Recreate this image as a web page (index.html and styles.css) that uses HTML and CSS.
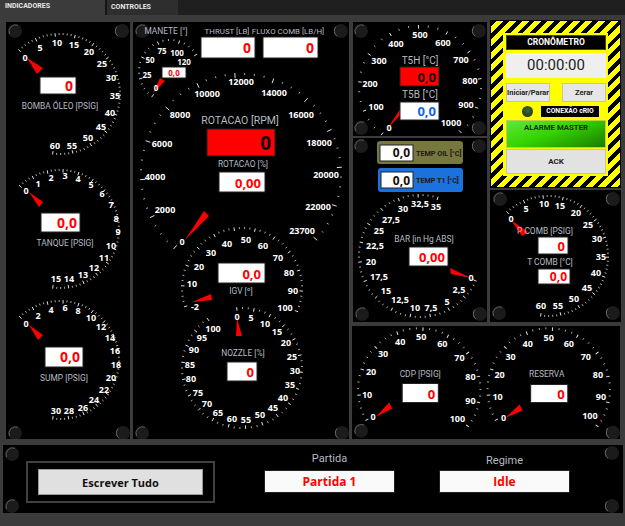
FILE: index.html
```html
<!DOCTYPE html>
<html lang="pt">
<head>
<meta charset="utf-8">
<title>Indicadores</title>
<link rel="stylesheet" href="styles.css">
</head>
<body>
<svg class="defs" width="0" height="0" aria-hidden="true">
  <defs>
    <symbol id="screw" viewBox="0 0 16 16" overflow="visible">
      <circle cx="8" cy="8" r="7" fill="#1b1b1b"/>
      <path d="M2.5 11 A6.6 6.6 0 0 1 11 2.3" fill="none" stroke="#5a5a5a" stroke-width="1"/>
    </symbol>
    <symbol id="screwr" viewBox="0 0 16 16" overflow="visible">
      <circle cx="8" cy="8" r="7" fill="#1b1b1b"/>
      <path d="M3 3.5 A6.6 6.6 0 0 0 4 13.2" fill="none" stroke="#6a6a6a" stroke-width="1"/>
    </symbol>
  </defs>
</svg>
<div class="tabs">
  <div class="tab tab-on">INDICADORES</div>
  <div class="tab tab-off">CONTROLES</div>
</div>
<main class="board">
  <section class="panel">
    <svg class="canvas" viewBox="6 22 124 417">
      <use href="#screw" x="7" y="23" width="16" height="16"/><use href="#screwr" x="114" y="23" width="16" height="16"/>
      <use href="#screw" x="7" y="425" width="16" height="16"/><use href="#screwr" x="115" y="425" width="16" height="16"/>
      <g class="ticks" data-c="60 94 61" data-a="-43 187" data-n="12" data-m="4"></g>
      <polygon class="needle" points="27,58 37,74 43,68"/>
      <text class="sc" x="25" y="61">0</text><text class="sc" x="40" y="51">5</text><text class="sc" x="57" y="46">10</text><text class="sc" x="74" y="48">15</text><text class="sc" x="89" y="55">20</text><text class="sc" x="102" y="67">25</text><text class="sc" x="111" y="81">30</text><text class="sc" x="115" y="99">35</text><text class="sc" x="110" y="116">40</text><text class="sc" x="101" y="130">45</text><text class="sc" x="88" y="141">50</text><text class="sc" x="72" y="149">55</text><text class="sc" x="55" y="149">60</text>
      <rect class="box" x="40" y="77" width="36" height="17"/><text class="val" x="73" y="91">0</text>
      <text class="lab" x="60" y="109">BOMBA ÓLEO [PSIG]</text>

      <g class="ticks" data-c="60 229 60" data-a="-43 187" data-n="15" data-m="3"></g>
      <polygon class="needle" points="29,192 39,207 43,202"/>
      <text class="sc" x="26" y="194">0</text><text class="sc" x="38" y="187">1</text><text class="sc" x="51" y="181">2</text><text class="sc" x="65" y="179">3</text><text class="sc" x="78" y="182">4</text><text class="sc" x="91" y="188">5</text><text class="sc" x="102" y="197">6</text><text class="sc" x="111" y="208">7</text><text class="sc" x="116" y="222">8</text><text class="sc" x="118" y="235">9</text><text class="sc" x="111" y="249">10</text><text class="sc" x="104" y="261">11</text><text class="sc" x="94" y="271">12</text><text class="sc" x="83" y="278">13</text><text class="sc" x="69" y="282">14</text><text class="sc" x="56" y="282">15</text>
      <rect class="box" x="41" y="213" width="39" height="19"/><text class="val" x="77" y="228">0,0</text>
      <text class="lab" x="65" y="246">TANQUE [PSIG]</text>

      <g class="ticks" data-c="60 360 60" data-a="-43 187" data-n="15" data-m="3"></g>
      <polygon class="needle" points="29,325 38,340 43,335"/>
      <text class="sc" x="26" y="327">0</text><text class="sc" x="38" y="319">2</text><text class="sc" x="51" y="313">4</text><text class="sc" x="65" y="311">6</text><text class="sc" x="78" y="314">8</text><text class="sc" x="91" y="321">10</text><text class="sc" x="101" y="330">12</text><text class="sc" x="110" y="341">14</text><text class="sc" x="115" y="354">16</text><text class="sc" x="116" y="368">18</text><text class="sc" x="111" y="381">20</text><text class="sc" x="104" y="393">22</text><text class="sc" x="94" y="403">24</text><text class="sc" x="83" y="411">26</text><text class="sc" x="69" y="414">28</text><text class="sc" x="56" y="414">30</text>
      <rect class="box" x="45" y="347" width="38" height="20"/><text class="val" x="80" y="362">0,0</text>
      <text class="lab" x="64" y="381">SUMP [PSIG]</text>
    </svg>
  </section>

  <section class="panel">
    <svg class="canvas" viewBox="133 22 216 417">
      <use href="#screw" x="134" y="23" width="16" height="16"/><use href="#screwr" x="333" y="23" width="16" height="16"/>
      <use href="#screw" x="134" y="425" width="16" height="16"/><use href="#screwr" x="334" y="425" width="16" height="16"/>

      <text class="lab" x="166" y="34">MANETE [°]</text>
      <g class="ticks" data-c="170 71 32" data-a="-145 58" data-n="5" data-m="3"></g>
      <polygon class="needle" points="153,93 160,78 165,81"/>
      <text class="sc s8" x="156" y="91">0</text><text class="sc s8" x="147" y="78">25</text><text class="sc s8" x="150" y="63">50</text><text class="sc s8" x="162" y="54">75</text><text class="sc s8" x="177" y="56">100</text><text class="sc s8" x="184" y="65">120</text>
      <rect class="box" x="162" y="67" width="24" height="11"/><text class="val v9" x="174" y="76">0,0</text>

      <text class="lab l8" x="227" y="34">THRUST [LB]</text><text class="lab l8" x="288" y="34">FLUXO COMB [LB/H]</text>
      <rect class="box" x="201" y="37" width="54" height="21"/><text class="val v14" x="251" y="53">0</text>
      <rect class="box" x="263" y="37" width="55" height="21"/><text class="val v14" x="314" y="53">0</text>

      <g class="ticks" data-c="241 174 101" data-a="-138 131" data-n="12" data-m="3"></g>
      <polygon class="needle" points="185,240 204,211 209,216"/>
      <text class="sc" x="182" y="245">0</text><text class="sc" x="165" y="213">2000</text><text class="sc" x="155" y="180">4000</text><text class="sc" x="162" y="147">6000</text><text class="sc" x="180" y="118">8000</text><text class="sc" x="207" y="97">10000</text><text class="sc" x="241" y="85">12000</text><text class="sc" x="274" y="96">14000</text><text class="sc" x="301" y="118">16000</text><text class="sc" x="319" y="146">18000</text><text class="sc" x="326" y="178">20000</text><text class="sc" x="318" y="210">22000</text><text class="sc" x="302" y="234">23700</text>
      <text class="lab l13" x="240" y="124">ROTACAO [RPM]</text>
      <rect class="box red" x="207" y="129" width="68" height="27"/><text class="val v20 dark" x="271" y="150">0</text>
      <text class="lab" x="243" y="167">ROTACAO [%]</text>
      <rect class="box" x="219" y="172" width="46" height="20"/><text class="val v13" x="261" y="188">0,00</text>

      <g class="ticks" data-c="242 288 61" data-a="-108 113" data-n="11" data-m="3"></g>
      <polygon class="needle" points="192,302 211,294 212,300"/>
      <text class="sc" x="195" y="310">-2</text><text class="sc" x="192" y="287">10</text><text class="sc" x="199" y="270">20</text><text class="sc" x="211" y="256">30</text><text class="sc" x="227" y="247">40</text><text class="sc" x="246" y="243">50</text><text class="sc" x="263" y="249">60</text><text class="sc" x="278" y="261">70</text><text class="sc" x="289" y="276">80</text><text class="sc" x="293" y="294">90</text><text class="sc" x="285" y="311">100</text>
      <rect class="box" x="218" y="263" width="47" height="20"/><text class="val v13" x="261" y="279">0,0</text>
      <text class="lab" x="241" y="294">IGV [º]</text>

      <g class="ticks" data-c="242 368 61" data-a="-5 325" data-n="20" data-m="2"></g>
      <polygon class="needle" points="237,318 236,336 242,336"/>
      <text class="sc" x="237" y="320">0</text><text class="sc" x="251" y="321">5</text><text class="sc" x="265" y="327">10</text><text class="sc" x="277" y="335">15</text><text class="sc" x="286" y="346">20</text><text class="sc" x="292" y="360">25</text><text class="sc" x="295" y="374">30</text><text class="sc" x="290" y="388">35</text><text class="sc" x="283" y="401">40</text><text class="sc" x="273" y="411">45</text><text class="sc" x="260" y="418">50</text><text class="sc" x="246" y="423">55</text><text class="sc" x="232" y="422">60</text><text class="sc" x="218" y="416">65</text><text class="sc" x="207" y="407">70</text><text class="sc" x="198" y="396">75</text><text class="sc" x="191" y="382">80</text><text class="sc" x="190" y="368">85</text><text class="sc" x="194" y="353">90</text><text class="sc" x="202" y="341">95</text><text class="sc" x="213" y="332">100</text>
      <text class="lab" x="243" y="356">NOZZLE [%]</text>
      <rect class="box" x="227" y="362" width="30" height="19"/><text class="val v13" x="254" y="377">0</text>
    </svg>
  </section>

  <div class="right">
    <div class="upper">
      <div class="stack">
        <section class="panel p-t5">
          <svg class="canvas" viewBox="353 22 134 114">
            <use href="#screw" x="353" y="23" width="16" height="16"/><use href="#screwr" x="471" y="23" width="16" height="16"/>
            <use href="#screw" x="353" y="120" width="16" height="16"/><use href="#screwr" x="471" y="120" width="16" height="16"/>
            <g class="ticks" data-c="420 87 62" data-a="-141 138" data-n="10" data-m="2"></g>
            <polygon class="needle" points="387,129 401,108 403,112"/>
            <text class="sc" x="389" y="131">0</text><text class="sc" x="376" y="110">100</text><text class="sc" x="370" y="87">200</text><text class="sc" x="379" y="64">300</text><text class="sc" x="396" y="47">400</text><text class="sc" x="420" y="38">500</text><text class="sc" x="443" y="46">600</text><text class="sc" x="461" y="63">700</text><text class="sc" x="470" y="84">800</text><text class="sc" x="466" y="108">900</text><text class="sc" x="451" y="126">1000</text>
            <text class="lab l11" x="420" y="64">T5H [°C]</text>
            <rect class="box red" x="400" y="67" width="39" height="19"/><text class="val v13 dark" x="436" y="82">0,0</text>
            <text class="lab l11" x="420" y="98">T5B [°C]</text>
            <rect class="box" x="400" y="102" width="39" height="18"/><text class="val v13 blue" x="436" y="116">0,0</text>
          </svg>
        </section>
        <section class="panel p-bar">
          <svg class="canvas" viewBox="353 138 134 184">
            <use href="#screw" x="353" y="138" width="16" height="16"/><use href="#screwr" x="471" y="138" width="16" height="16"/>
            <use href="#screw" x="354" y="306" width="16" height="16"/><use href="#screwr" x="472" y="306" width="16" height="16"/>
            <rect class="plate olive" x="377" y="141" width="86" height="23" rx="3"/>
            <rect class="box" x="380" y="145" width="33" height="16"/><text class="val v12 dark" x="410" y="157">0,0</text>
            <text class="tag" x="416" y="156">TEMP OIL [°C]</text>
            <rect class="plate azure" x="378" y="168" width="85" height="24" rx="3"/>
            <rect class="box" x="381" y="172" width="32" height="16"/><text class="val v12 dark" x="410" y="185">0,0</text>
            <text class="tag" x="416" y="183">TEMP T1 [°C]</text>
            <g class="ticks" data-c="420 256 62" data-a="114 377" data-n="14" data-m="3"></g>
            <polygon class="needle" points="471,278 450,268 451,274"/>
            <text class="sc" x="471" y="281">0</text><text class="sc" x="459" y="293">2,5</text><text class="sc" x="447" y="305">5</text><text class="sc" x="431" y="311">7,5</text><text class="sc" x="415" y="311">10</text><text class="sc" x="400" y="303">12,5</text><text class="sc" x="386" y="294">15</text><text class="sc" x="379" y="280">17,5</text><text class="sc" x="371" y="265">20</text><text class="sc" x="375" y="249">22,5</text><text class="sc" x="379" y="234">25</text><text class="sc" x="391" y="223">27,5</text><text class="sc" x="403" y="212">30</text><text class="sc" x="420" y="207">32,5</text><text class="sc" x="436" y="210">35</text>
            <text class="lab" x="424" y="242">BAR [in Hg ABS]</text>
            <rect class="box" x="409" y="247" width="39" height="19"/><text class="val v13" x="445" y="262">0,00</text>
          </svg>
        </section>
      </div>
      <div class="stack">
        <section class="chrono">
          <div class="chrono-in">
            <div class="chrono-title">CRONÔMETRO</div>
            <div class="chrono-time">00:00:00</div>
            <div class="chrono-btns"><button class="btn">Iniciar/Parar</button><button class="btn">Zerar</button></div>
            <div class="chrono-conn"><span class="led"></span><span class="conn">CONEXÃO cRIO</span></div>
            <div class="alarm">ALARME MASTER</div>
            <button class="ack">ACK</button>
          </div>
        </section>
        <section class="panel p-comb">
          <svg class="canvas" viewBox="490 190 131 132">
            <use href="#screw" x="492" y="191" width="16" height="16"/><use href="#screwr" x="605" y="191" width="16" height="16"/>
            <use href="#screw" x="491" y="305" width="16" height="16"/><use href="#screwr" x="605" y="305" width="16" height="16"/>
            <g class="ticks" data-c="548 256 61" data-a="-43 187" data-n="12" data-m="4"></g>
            <polygon class="needle" points="511,220 522,236 528,232"/>
            <text class="sc" x="511" y="222">0</text><text class="sc" x="526" y="212">5</text><text class="sc" x="544" y="207">10</text><text class="sc" x="560" y="209">15</text><text class="sc" x="576" y="216">20</text><text class="sc" x="588" y="228">25</text><text class="sc" x="597" y="242">30</text><text class="sc" x="601" y="260">35</text><text class="sc" x="596" y="276">40</text><text class="sc" x="587" y="291">45</text><text class="sc" x="574" y="302">50</text><text class="sc" x="558" y="309">55</text><text class="sc" x="541" y="309">60</text>
            <text class="lab" x="545" y="234">P COMB [PSIG]</text>
            <rect class="box" x="538" y="237" width="30" height="17"/><text class="val v13" x="565" y="251">0</text>
            <text class="lab" x="550" y="265">T COMB [°C]</text>
            <rect class="box" x="538" y="269" width="32" height="15"/><text class="val v12" x="567" y="281">0,0</text>
          </svg>
        </section>
      </div>
    </div>
    <section class="panel p-low">
      <svg class="canvas" viewBox="352 326 267 112">
        <use href="#screw" x="353" y="422" width="16" height="16"/><use href="#screwr" x="604" y="424" width="16" height="16"/>
        <g class="ticks" data-c="419 389 62" data-a="-120 127" data-n="10" data-m="3"></g>
        <polygon class="needle" points="376,416 389,402 392,408"/>
        <text class="sc" x="373" y="419">0</text><text class="sc" x="367" y="397">10</text><text class="sc" x="371" y="375">20</text><text class="sc" x="383" y="357">30</text><text class="sc" x="400" y="345">40</text><text class="sc" x="421" y="340">50</text><text class="sc" x="442" y="347">60</text><text class="sc" x="459" y="361">70</text><text class="sc" x="470" y="380">80</text><text class="sc" x="470" y="403">90</text><text class="sc" x="457" y="421">100</text>
        <text class="lab" x="420" y="377">CDP [PSIG]</text>
        <rect class="box" x="402" y="383" width="36" height="19"/><text class="val v13" x="435" y="398">0</text>
        <g class="ticks" data-c="548 389 62" data-a="-120 127" data-n="10" data-m="3"></g>
        <polygon class="needle" points="505,417 519,404 522,410"/>
        <text class="sc" x="503" y="420">0</text><text class="sc" x="497" y="399">10</text><text class="sc" x="499" y="378">20</text><text class="sc" x="510" y="360">30</text><text class="sc" x="527" y="347">40</text><text class="sc" x="548" y="341">50</text><text class="sc" x="568" y="347">60</text><text class="sc" x="585" y="360">70</text><text class="sc" x="597" y="378">80</text><text class="sc" x="600" y="399">90</text><text class="sc" x="589" y="418">100</text>
        <text class="lab" x="546" y="377">RESERVA</text>
        <rect class="box" x="530" y="384" width="37" height="18"/><text class="val v13" x="564" y="398">0</text>
      </svg>
    </section>
  </div>
</main>

<section class="panel footer">
  <svg class="canvas" viewBox="3 445 620 68">
    <use href="#screw" x="4" y="446" width="16" height="16"/><use href="#screwr" x="604" y="445" width="16" height="16"/>
    <use href="#screw" x="4" y="498" width="16" height="16"/><use href="#screwr" x="604" y="498" width="16" height="16"/>
  </svg>
  <div class="write-frame"><button class="write">Escrever Tudo</button></div>
  <div class="field field-a"><span class="field-lab">Partida</span><div class="field-val">Partida 1</div></div>
  <div class="field field-b"><span class="field-lab">Regime</span><div class="field-val">Idle</div></div>
</section>
<script src="gauge.js"></script>
</body>
</html>
```
FILE: styles.css
```css
* { box-sizing: border-box; }
html, body { margin: 0; height: 100%; }
body {
  width: 625px; height: 526px; overflow: hidden;
  background: #3b3b3b;
  font-family: "Open Sans", "Noto Sans", sans-serif;
  position: relative;
}
.defs { position: absolute; }
.tabs { display: flex; height: 15px; background: #1f1f1f; }
.tab { font-family: Roboto, sans-serif; font-size: 7px; font-weight: 700; color: #e8e8e8; padding-top: 2px; }
.tab-on { width: 105px; background: #3b3b3b; padding-left: 5px; }
.tab-off { width: 73px; background: #2e2e2e; border-left: 2px solid #161616; padding-left: 4px; padding-top: 3px; }
.board {
  display: grid;
  grid-template-columns: 124px 216px 268px;
  column-gap: 3px;
  margin: 7px 0 0 6px;
  height: 417px;
}
.panel { position: relative; background: #000; }
.canvas { position: absolute; inset: 0; width: 100%; height: 100%; display: block; }
.right { display: flex; flex-direction: column; gap: 4px; margin-left: 1px; }
.upper { display: grid; grid-template-columns: 134px 131px; column-gap: 3px; height: 300px; }
.stack { display: flex; flex-direction: column; gap: 2px; }
.p-t5 { height: 114px; }
.p-bar { flex: 1; }
.p-comb { flex: 1; }
.p-low { flex: 1; margin-left: -1px; }

.needle { fill: #ff0000; }
.sc { font-size: 9px; font-weight: 700; fill: #fff; text-anchor: middle; }
.s8 { font-size: 8px; }
.lab { font-family: Roboto, sans-serif; font-size: 8.4px; fill: #b4bcc4; text-anchor: middle; }
.l8 { font-size: 7.9px; }
.l11 { font-size: 10px; }
.l13 { font-size: 10.5px; }
.box { fill: #fff; stroke: #222; stroke-width: 1; }
.red { fill: #ff0000; }
.val { font-size: 14px; font-weight: 700; fill: #ff0000; text-anchor: end; }
.v9 { font-size: 8px; text-anchor: middle; }
.v12 { font-size: 12px; }
.v13 { font-size: 13px; }
.v14 { font-size: 14px; }
.v20 { font-size: 19px; }
.dark { fill: #1a0a0a; }
.blue { fill: #1464e6; }
.plate { stroke: none; }
.olive { fill: #77773f; }
.azure { fill: #1b72dc; }
.tag { font-family: Roboto, sans-serif; font-size: 7.2px; font-weight: 700; fill: #1a1a10; }

.chrono {
  height: 168px; margin-top: -2px;
  border: 1px solid #000;
  background-color: #ffff00;
  background-image:
    linear-gradient(#ffff00, #ffff00),
    repeating-linear-gradient(135deg, #000 0 4px, #ffff00 4px 9px);
  background-size: 105px 143px, 100% 100%;
  background-position: center, 0 0;
  background-repeat: no-repeat;
  padding: 14px 14px 13px 15px;
  font-family: Roboto, sans-serif;
}
.chrono-in { display: flex; flex-direction: column; height: 100%; }
.chrono-title {
  height: 15px; background: #000; color: #fff; border: 1px solid #444;
  font-size: 8.5px; font-weight: 700; text-align: center; line-height: 13px;
}
.chrono-time {
  height: 25px; margin-top: 3px; background: #efefef;
  color: #222; font-size: 15px; line-height: 25px; text-align: center;
}
.chrono-btns { display: flex; justify-content: space-between; margin-top: 5px; }
.btn {
  width: 44px; height: 19px; padding: 0; border: 1px solid #c8c8a0; background: #e6e6e6;
  font-family: inherit; font-size: 7.5px; font-weight: 700; color: #222;
}
.chrono-conn { display: flex; align-items: center; height: 12px; margin-top: 3px; padding-left: 16px; gap: 8px; }
.led { width: 11px; height: 11px; border-radius: 50%; background: radial-gradient(circle at 50% 40%, #3f6a2c, #1a2e12); }
.conn {
  width: 58px; height: 11px; background: #000; color: #fff;
  font-size: 6.8px; font-weight: 700; line-height: 11px; text-align: center;
}
.alarm {
  height: 28px; margin-top: 3px; border: 1px solid #c9c94a;
  background: linear-gradient(160deg, #5fe83a 0%, #33d400 45%, #1a7c00 100%);
  color: #1d2a10; font-size: 7.8px; font-weight: 700; text-align: center; line-height: 14px;
}
.ack {
  flex: 1; margin-top: 1px; padding: 0; border: 1px solid #c8c8a0; background: #e2e2e2;
  font-family: inherit; font-size: 8px; font-weight: 700; color: #222;
}

.footer {
  position: absolute; left: 3px; top: 445px; width: 620px; height: 68px;
  display: flex; align-items: center;
}
.write-frame {
  position: relative; width: 189px; height: 42px; margin-left: 23px; margin-top: 6px;
  border: 2px solid #414141; display: flex; align-items: center; justify-content: center;
}
.write {
  width: 165px; height: 26px; padding: 0; border: 1px solid #999; background: #e0e0e0;
  font-family: inherit; font-size: 11px; font-weight: 700; color: #111;
}
.field { position: relative; width: 131px; display: flex; flex-direction: column; align-items: center; }
.field-a { margin-left: 49px; margin-bottom: 13px; }
.field-b { margin-left: 44px; margin-bottom: 11px; }
.field-lab { font-family: Roboto, sans-serif; font-size: 11px; color: #b4bcc4; line-height: 14px; margin-bottom: 4px; }
.field-b .field-lab { margin-bottom: 2px; }
.field-val {
  width: 131px; height: 23px; background: #fafafa; border: 1px solid #222;
  color: #ff0000; font-size: 12px; font-weight: 700; text-align: center; line-height: 21px;
}
```
FILE: gauge.js
```js
// Draws the scale marks of each dial from its data attributes.
document.querySelectorAll('.ticks').forEach(function (g) {
  var c = g.dataset.c.split(' ').map(Number);
  var a = g.dataset.a.split(' ').map(Number);
  var n = Number(g.dataset.n);
  var m = Number(g.dataset.m);
  var total = n * (m + 1);
  for (var i = 0; i <= total; i++) {
    var deg = a[0] + (a[1] - a[0]) * i / total;
    var r = deg * Math.PI / 180;
    var major = i % (m + 1) === 0;
    var inner = c[2] - (major ? (c[2] > 80 ? 5 : 3.5) : 2);
    var line = document.createElementNS('http://www.w3.org/2000/svg', 'line');
    line.setAttribute('x1', (c[0] + inner * Math.sin(r)).toFixed(1));
    line.setAttribute('y1', (c[1] - inner * Math.cos(r)).toFixed(1));
    line.setAttribute('x2', (c[0] + c[2] * Math.sin(r)).toFixed(1));
    line.setAttribute('y2', (c[1] - c[2] * Math.cos(r)).toFixed(1));
    line.setAttribute('stroke', major ? '#e4e4e4' : '#bdbdbd');
    line.setAttribute('stroke-width', major ? '1' : '0.9');
    g.appendChild(line);
  }
});
```
